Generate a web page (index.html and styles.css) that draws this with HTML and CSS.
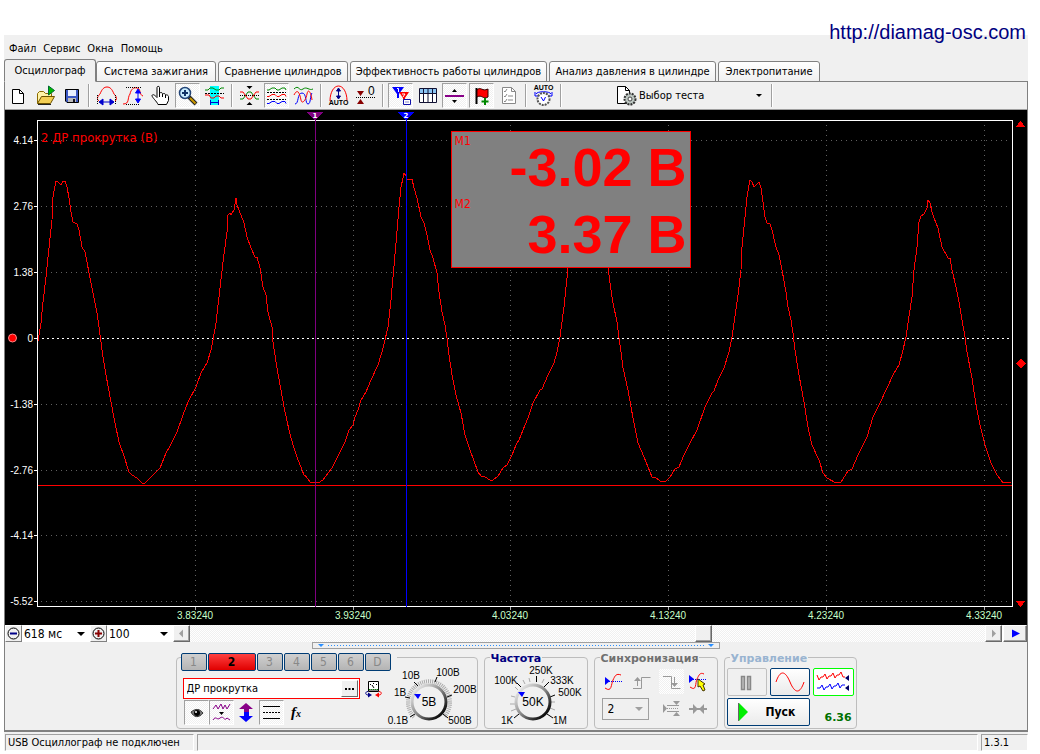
FILE: index.html
```html
<!DOCTYPE html>
<html lang="ru">
<head>
<meta charset="utf-8">
<title>Осциллограф</title>
<link rel="stylesheet" href="styles.css">
</head>
<body>
<a class="site-link" href="http://diamag-osc.com">http://diamag-osc.com</a>
<main class="app">
  <nav class="menu">
    <button>Файл</button><button>Сервис</button><button>Окна</button><button>Помощь</button>
  </nav>
  <div class="tabs" role="tablist">
    <button class="tab active" role="tab">Осциллограф</button>
    <button class="tab ignition" role="tab">Система зажигания</button>
    <button class="tab compare" role="tab">Сравнение цилиндров</button>
    <button class="tab efficiency" role="tab">Эффективность работы цилиндров</button>
    <button class="tab pressure" role="tab">Анализ давления в цилиндре</button>
    <button class="tab power" role="tab">Электропитание</button>
  </div>
  <div class="workspace">
    <div class="toolbar">
      <button class="tool" aria-label="Новый"><svg viewBox="0 0 25 25"><path d="M7.500 6.500h7l4 4v10h-11z" fill="#fff" stroke="#000"/><path d="M14.500 6.500v4h4" fill="none" stroke="#000"/></svg></button>
      <button class="tool" aria-label="Открыть"><svg viewBox="0 0 25 25"><path d="M5.500 20.500v-10l2-2h4l2 2h6v4" fill="#fff3a8" stroke="#8a6a00"/><path d="M5.500 20.500l4-7h13l-4 7z" fill="#f3cf55" stroke="#6b5200"/><path d="M16.500 3v9l6-4.500z" fill="#0b0" stroke="#063"/><path d="M6 21.500h13" stroke="#222"/></svg></button>
      <button class="tool" aria-label="Сохранить"><svg viewBox="0 0 25 25"><path d="M6.500 6.500h13v13H8l-1.500-1.500z" fill="#3b57c4" stroke="#000"/><path d="M9 7h8v6H9z" fill="#e8eeff"/><path d="M9 15h8v4H9z" fill="#bbb"/><path d="M14 16h2v3h-2z" fill="#112"/></svg></button>
      <i class="sep"></i>
      <button class="tool" aria-label="Масштаб по времени"><svg viewBox="0 0 25 25"><path d="M5 18c-3-2-1-5 1-7 2-5 4-7 7-7s5 2 7 7c2 2 4 5 1 7" fill="none" stroke="red"/><path d="M5 19h15M9 16l-4 3 4 3zM16 16l4 3-4 3z" stroke="#00c" fill="#00c"/><path d="M3.500 12v10M21.500 12v10" stroke="#000" stroke-dasharray="1 1"/></svg></button>
      <button class="tool" aria-label="Масштаб по амплитуде"><svg viewBox="0 0 25 25"><path d="M2 21c7 0 4-6 7-10 1-5 4-7 7-6 4 0 2 7 6 8" fill="none" stroke="red"/><path d="M5 4.500h16M5 21.500h14" stroke="#000" stroke-dasharray="1 1"/><path d="M17 7v11M14.500 10l2.500-4 2.500 4zM14.500 16l2.500 4 2.500-4z" stroke="#00f" fill="#00f"/></svg></button>
      <button class="tool" aria-label="Рука"><svg viewBox="0 0 25 25"><path d="M10 21.500c-1-3-6-7-6-9 1-2 3 0 5 2V4.500c0-1.500 2.500-1.500 2.500 0v6c1-1.500 3-1.500 3 1 1-1.500 3-1.500 3 1 1-1.500 3 0 3 1v4l-2 4z" fill="#fff" stroke="#000"/><path d="M11.500 10v4M14.500 11v3M17.500 12v3" stroke="#000"/></svg></button>
      <button class="tool on" aria-label="Лупа"><svg viewBox="0 0 25 25"><path d="M14 14l7 7" stroke="#222" stroke-width="4"/><path d="M15 15l5.500 5.500" stroke="#c90" stroke-width="2"/><circle cx="10" cy="10" r="5.500" fill="#c9ecff" stroke="#247" stroke-width="1.500"/><path d="M7 10h6M10 7v6" stroke="#136" stroke-width="2"/></svg></button>
      <button class="tool" aria-label="Фрагмент"><svg viewBox="0 0 25 25"><path d="M8 3h9v19H8z" fill="#0ff"/><g fill="none"><path d="M3 7h3l2-2h3l3 2h3l2-2h3" stroke="#080"/><path d="M3 10.500h19" stroke="#000" stroke-dasharray="2 1"/><path d="M3 12h4l2 3h3l2-2h3l2 2h3" stroke="red"/><path d="M8 19.500h9M8.500 17v5M16.500 17v5" stroke="#00c"/></g></svg></button>
      <i class="sep"></i>
      <button class="tool" aria-label="Наложение"><svg viewBox="0 0 25 25"><path d="M3 16h3l5-7h3l5 7h3" fill="none" stroke="#080"/><path d="M3 9h3l5 7h3l5-7h3" fill="none" stroke="red"/><path d="M3 12.500h19" stroke="#000" stroke-dasharray="1 1"/><path d="M9.500 3h6l-3 3zM9.500 22h6l-3-3z"/></svg></button>
      <button class="tool on" aria-label="Раздельно"><svg viewBox="0 0 25 25"><g fill="none"><path d="M3 7h2l3-2h3l2 2h2l3-2h3l1 2" stroke="#080"/><path d="M3 13.500h2l3-2h3l2 2h2l3-2h3l1 2" stroke="red"/><path d="M3 20.500h2l3-2h3l2 2h2l3-2h3l1 2" stroke="#00f"/><path d="M3 9.500h19M3 16.500h19" stroke="#000" stroke-dasharray="2 1"/></g></svg></button>
      <button class="tool" aria-label="Совместно"><svg viewBox="0 0 25 25"><g fill="none"><path d="M3 6c5-5 5 3 9 0s6 2 10 0" stroke="#080"/><path d="M4 21c4 0 2-11 7-11s3 11 6 11 2-9 4-11" stroke="#00f"/><path d="M3 12c4-8 6 0 7 5s5 0 6-6 4-2 5 6" stroke="red"/></g></svg></button>
      <i class="sep"></i>
      <button class="tool" aria-label="Автомасштаб"><svg viewBox="0 0 25 25"><path d="M4 18C4 9 8 3 12.500 3S21 9 21 18" fill="none" stroke="red"/><path d="M12.500 6v9M10.500 8l2-3 2 3zM10.500 13l2 3 2-3z" stroke="#008" fill="#008"/><text class="tiny" x="12.500" y="22" text-anchor="middle">AUTO</text></svg></button>
      <button class="tool" aria-label="Ноль"><svg viewBox="0 0 25 25"><path d="M4 8h7l-3.500 5zM4 21h7l-3.500-5z" fill="#800"/><path d="M3 14.500h19" stroke="#000" stroke-dasharray="1 1"/><text class="digit" x="15" y="12">0</text></svg></button>
      <i class="sep"></i>
      <button class="tool on" aria-label="Маркеры"><svg viewBox="0 0 25 25"><path d="M4 4h12l-5 7v4H9v-4z" fill="#00f"/><path d="M11 9h10l-4 6v4h-2v-4z" fill="red"/><path d="M9 5.500h1.500V9M14 11h3l-2 3" stroke="#fff" fill="none"/><path d="M15.500 16.500h7v5h-7z" fill="#fff" stroke="#11a"/><path d="M17 19h4" stroke="#88c"/></svg></button>
      <button class="tool" aria-label="Таблица"><svg viewBox="0 0 25 25"><path d="M4.500 5.500h17v14h-17z" fill="#fff" stroke="#113"/><path d="M5 6h16v4H5z" fill="#8bc5f5"/><path d="M4 10.500h18M8.500 6v13M13 6v13M17.500 6v13" stroke="#113"/></svg></button>
      <button class="tool on" aria-label="Линия"><svg viewBox="0 0 25 25"><path d="M3 13h19" stroke="#808" stroke-width="2"/><path d="M10 9h5l-2.500-3zM10 17h5l-2.500 3z"/></svg></button>
      <button class="tool on" aria-label="Флаг"><svg viewBox="0 0 25 25"><path d="M7.500 5v16" stroke="#000" stroke-width="2"/><path d="M8 7c4-4 5 2 11-1v8c-5 3-6-3-11 0z" fill="red" stroke="#300"/><path d="M16 15v7M12.500 18.500h7" stroke="#080" stroke-width="2"/></svg></button>
      <button class="tool" aria-label="Список"><svg viewBox="0 0 25 25"><path d="M6.500 4.500h9l4 4v12h-13z" fill="#fff" stroke="#888"/><path d="M15.500 4.500v4h4M8 8l1 1 2-3M8 13l1 1 2-3M8 18l1 1 2-3M12 13h5M12 17h5" fill="none" stroke="#888"/></svg></button>
      <i class="sep"></i>
      <button class="tool" aria-label="Авто"><svg viewBox="0 0 25 25"><text class="tiny" x="12.500" y="7" text-anchor="middle">AUTO</text><path d="M5 11c1-3 14-3 15 0M4 9v4h4M21 9v4h-4" fill="none" stroke="#00f"/><circle cx="12.500" cy="16" r="6" fill="#fff" stroke="#555" stroke-width="2" stroke-dasharray="2 1"/><path d="M10 14l2.500 4 2-4" fill="none" stroke="#00f"/></svg></button>
      <i class="sep"></i>
      <div class="test-picker">
        <svg class="test-icon" viewBox="0 0 22 22"><path d="M2.500 1.500h8l4 4v13h-12z" fill="#fff" stroke="#000"/><path d="M10.500 1.500v4h4" fill="none" stroke="#000"/><circle cx="15" cy="14" r="5.500" fill="#bcc6c1" stroke="#333" stroke-width="2" stroke-dasharray="2 1"/><circle cx="15" cy="14" r="2" fill="#fff" stroke="#444"/></svg>
        <label class="pick"><select aria-label="Выбор теста"><option>Выбор теста</option></select></label>
      </div>
      <i class="sep"></i>
    </div>

    <div class="scope">
      <svg class="chart" viewBox="5 110 1022 515" role="img" aria-label="2 ДР прокрутка (В)">
        <g class="grid">
          <path d="M41 140.500H1010M41 206.500H1010M41 272.500H1010M41 404.500H1010M41 470.500H1010M41 535.500H1010M41 601.500H1010"/>
          <path d="M195.500 125V605M353.500 125V605M510.500 125V605M668.500 125V605M826.500 125V605M984.500 125V605"/>
        </g>
        <path class="zero" d="M37 338.500H1010"/>
        <path class="ticks" d="M34 140.500h4M34 206.500h4M34 272.500h4M34 338.500h4M34 404.500h4M34 470.500h4M34 535.500h4M34 601.500h4"/>
        <path class="ticks dim" d="M195.500 607v3M353.500 607v3M510.500 607v3M668.500 607v3M826.500 607v3M984.500 607v3"/>
        <g class="axis light" text-anchor="end">
          <text x="33" y="144">4.14</text><text x="33" y="210">2.76</text><text x="33" y="276">1.38</text><text x="33" y="342">0</text><text x="33" y="408">-1.38</text><text x="33" y="474">-2.76</text><text x="33" y="539">-4.14</text><text x="33" y="605">-5.52</text>
        </g>
        <g class="axis time" text-anchor="middle">
          <text x="195" y="619">3.83240</text><text x="353" y="619">3.93240</text><text x="510" y="619">4.03240</text><text x="668" y="619">4.13240</text><text x="826" y="619">4.23240</text><text x="984" y="619">4.33240</text>
        </g>
        <text class="series" x="41" y="142">2 ДР прокрутка (В)</text>
        <path class="level" d="M37 485.500H1012"/>
        <path class="wave" d="M38 341L41 323 43 302 46 277 48 257 52 220 53 197 55 186 56 181 57 181 61 185 63 181 65 181 67 187 69 198 71 212 73 222 77 224 79 230 82 247 85 252 87 262 89 273 93 293 97 313 99 327 101 342 103 357 106 375 111 402 115 423 119 442 124 456 129 472 132 475 137 478 142 483 145 483 150 478 155 473 160 468 166 453 169 448 177 432 183 415 188 402 196 387 201 373 207 363 211 350 213 340 216 323 219 297 223 262 227 232 228 215 230 213 231 215 234 210 236 198 237 205 239 210 244 223 247 237 251 248 255 257 257 257 260 268 263 287 266 295 268 312 272 327 273 342 277 368 281 390 284 407 289 430 293 445 297 457 304 475 305 475 310 482 316 482 318 483 323 480 332 468 337 458 345 442 349 430 353 425 355 417 358 410 361 400 366 392 371 380 378 365 382 352 385 340 388 327 391 300 393 277 396 243 399 207 401 187 403 178 404 173 406 176 407 179 412 179 414 188 417 198 421 217 424 223 427 235 430 250 433 258 437 273 439 292 442 312 445 325 447 338 449 355 452 375 456 395 461 413 465 435 470 450 478 472 481 476 485 477 490 480 493 480 498 476 503 468 507 465 512 455 516 445 519 440 523 430 528 418 533 403 540 390 542 389 548 375 554 363 557 352 560 337 564 307 568 268 574 215 578 205 583 195 592 215 600 242 608 268 611 290 613 303 617 322 619 338 621 352 623 368 628 390 633 418 638 443 644 457 652 477 653 478 655 477 660 481 666 481 670 477 675 469 679 467 684 455 690 443 697 430 705 407 712 393 714 391 718 380 724 368 729 352 732 337 734 323 738 295 741 270 742 247 745 217 747 197 749 185 750 180 752 182 754 187 757 184 759 182 761 188 763 202 765 217 767 223 770 224 772 230 776 247 779 255 782 270 786 292 788 307 791 320 793 333 795 350 799 375 804 402 808 427 812 445 819 460 823 473 827 478 836 483 841 482 848 471 852 469 858 455 867 437 873 417 880 403 887 388 893 375 899 365 903 350 906 337 908 323 912 297 914 270 917 247 919 222 921 216 924 214 927 208 928 200 930 203 932 212 934 218 938 228 942 247 948 258 950 258 952 270 956 287 959 302 962 320 965 337 967 352 972 378 976 405 980 425 985 445 991 463 997 475 1003 483 1006 482 1011 483"/>
        <rect class="frame" x="37.500" y="120.500" width="975" height="486"/>
        <path d="M315.500 112V607" stroke="#800080"/><path d="M307 112h16l-7 8h-2z" fill="#800080"/><text class="mark" x="315" y="118">1</text>
        <path d="M406.500 112V607" stroke="#00f"/><path d="M398 112h16l-7 8h-2z" fill="#00f"/><text class="mark" x="406" y="118">2</text>
        <circle cx="12.500" cy="338" r="4" fill="red" stroke="#f88"/>
        <path d="M1015.500 127h10l-5-6zM1015.500 601h10l-5 6zM1015.500 363.500l5-5 5 5-5 5z" fill="red"/>
      </svg>
      <div class="meter">
        <span class="meter-name">M1</span><output class="meter-value">-3.02 В</output>
        <span class="meter-name second">M2</span><output class="meter-value">3.37 В</output>
      </div>
    </div>

    <div class="timeline">
      <button class="mini" aria-label="Уменьшить"><svg viewBox="0 0 17 17"><circle cx="8.500" cy="8.500" r="5.500" fill="none" stroke="#000"/><path d="M5 8.500h7" stroke="#008" stroke-width="2"/></svg></button>
      <label class="pick span"><select aria-label="Развёртка"><option>618 мс</option></select></label>
      <button class="mini" aria-label="Увеличить"><svg viewBox="0 0 17 17"><circle cx="8.500" cy="8.500" r="5.500" fill="none" stroke="#000"/><path d="M5 8.500h7M8.500 5v7" stroke="#800" stroke-width="2"/></svg></button>
      <label class="pick zoom"><select aria-label="Масштаб"><option>100</option></select></label>
      <button class="mini raised" aria-label="Влево"><svg viewBox="0 0 17 17"><path d="M10 4.500v8l-4-4z" fill="#a0a0a0"/></svg></button>
      <div class="track"><button class="thumb" aria-label="Ползунок"></button></div>
      <button class="mini raised" aria-label="Вправо"><svg viewBox="0 0 17 17"><path d="M7 4.500v8l4-4z" fill="#a0a0a0"/></svg></button>
      <button class="mini raised last" aria-label="В конец"><svg viewBox="0 0 17 17"><path d="M5 4.500v8l8-4z" fill="#00f"/></svg></button>
    </div>
    <div class="splitter"><i class="grip"></i><i class="dots"></i><i class="grip"></i></div>

    <div class="panels">
      <section class="group channel">
        <div class="channel-main">
          <div class="channel-tabs"><button>1</button><button class="current">2</button><button>3</button><button>4</button><button>5</button><button>6</button><button>D</button></div>
          <div class="name-row">
            <div class="name-box"><input type="text" value="ДР прокрутка" aria-label="Имя канала"><button class="more" aria-label="Выбрать датчик"><svg viewBox="0 0 15 15"><path d="M3 7h2v2H3zM6.500 7h2v2h-2zM10 7h2v2h-2z"/></svg></button></div>
            <button class="flat" aria-label="Датчик"><svg viewBox="0 0 20 20"><path d="M4.500 2.500h10v10h-10z" fill="#fff" stroke="#000"/><path d="M5 10h9v2H5z" fill="#888"/><path d="M5 10.500h9" stroke="#080" stroke-dasharray="1 1"/><path d="M6 5.500h1M9 4.500h1M12 5.500h1M8 6l2 3" stroke="#000"/><path d="M4 12.500c-3 0-3 3.500 0 3.500h1" fill="none" stroke="#008"/><path d="M4 13.500v5l4-2.500z" fill="#008"/><path d="M15 12.500c3 0 3 3.500 0 3.500h-1" fill="none" stroke="red"/><path d="M15 13.500v5l-4-2.500z" fill="red"/></svg></button>
          </div>
          <div class="icon-row">
            <button class="tool on" aria-label="Видимость"><svg viewBox="0 0 25 25"><path d="M7 12c5-4 9-3 12 1-4 5-9 5-12-1z" fill="#777" stroke="#333"/><circle cx="13" cy="13" r="3"/><circle cx="12" cy="12" r="1" fill="#fff"/></svg></button>
            <button class="tool on" aria-label="Фильтр"><svg viewBox="0 0 25 25"><path d="M4 9l3-4 2 4 3-5 2 5 2-4 2 4 3-5M4 20c3-5 4 1 7-2 4-3 4 4 7 0l3 2" fill="none" stroke="#808"/><path d="M10 12h5l-2.500 3z"/></svg></button>
            <button class="tool" aria-label="Смещение"><svg viewBox="0 0 25 25"><path d="M10 12V9H5l7-6 7 6h-4v3z" fill="#808"/><path d="M10 12v4H5l7 6 7-6h-4v-4z" fill="#00f"/></svg></button>
            <button class="tool on" aria-label="Линии"><svg viewBox="0 0 25 25"><path d="M4 6.500h17M4 18.500h17" stroke="#000"/><path d="M4 12.500h17" stroke="#000" stroke-dasharray="2 1"/></svg></button>
            <button class="tool fx" aria-label="Функция"><i>f</i><small>x</small></button>
          </div>
        </div>
        <svg class="knob" viewBox="387 664 90 64" role="img" aria-label="5В">
          <defs><linearGradient id="rim" x1="0" y1="0" x2="1" y2="1"><stop offset="0" stop-color="#fff"/><stop offset=".5" stop-color="#888"/><stop offset=".9" stop-color="#000"/></linearGradient></defs>
          <path d="M414 717A21 21 0 1 1 444 717" fill="none" stroke="#aaa" stroke-width="4" stroke-dasharray="1 1"/>
          <path class="dial-tick" d="M415 714l-5 3M410 698l-5-1M418 686l-4-4M435 682l2-5M447 697l5-2M443 714l5 4"/>
          <circle cx="429" cy="702" r="17" fill="#f0f0f0" stroke="url(#rim)" stroke-width="3"/>
          <path d="M414 694h7l-3 5z" fill="#00f"/>
          <text class="dial-value" x="429" y="706">5В</text>
          <g class="dial"><text x="411" y="679">10В</text><text x="448" y="676">100В</text><text x="400" y="696">1В</text><text x="465" y="693">200В</text><text x="398" y="724">0.1В</text><text x="460" y="724">500В</text></g>
        </svg>
      </section>
      <section class="group freq">
        <h2>Частота</h2>
        <svg class="knob" viewBox="488 664 96 64" role="img" aria-label="50K">
          <g stroke="#aaa"><path d="M515 704h-5M516 709l-5 2M515 697l-4-1M525 684l-2-4M530 682l-1-4M542 683l2-4M550 702h5M550 708l5 2M518 690l-3-3"/></g>
          <path class="dial-tick" d="M519 714l-5 4M521 687l-4-4M536.500 682v-6M544 687l5-5M550 697l5-2M547 714l6 4"/>
          <circle cx="533" cy="702" r="17" fill="#f0f0f0" stroke="url(#rim)" stroke-width="3"/>
          <path d="M518 692h7l-3 5z" fill="#00f"/>
          <text class="dial-value" x="533" y="706">50K</text>
          <g class="dial"><text x="541" y="674">250K</text><text x="506" y="684">100K</text><text x="562" y="684">333K</text><text x="570" y="696">500K</text><text x="507" y="724">1K</text><text x="560" y="724">1M</text></g>
        </svg>
      </section>
      <section class="group sync">
        <h2>Синхронизация</h2>
        <div class="sync-grid">
          <button class="tool" aria-label="Уровень"><svg viewBox="0 0 25 25"><path d="M4 19c7 5 6-4 8-8s3-7 8-5" fill="none" stroke="red"/><path d="M4 8v8l5-4z" fill="#00f"/><path d="M8 12.500h13" stroke="#00f" stroke-dasharray="1 1"/></svg></button>
          <button class="tool" aria-label="Фронт"><svg viewBox="0 0 25 25"><path d="M4 19.500h8.500v-11h9M8.500 17v-6" fill="none" stroke="#999"/><path d="M5 12l3.500-4 3.500 4z" fill="#999"/></svg></button>
          <button class="tool hatch" aria-label="Спад"><svg viewBox="0 0 25 25"><path d="M4 7.500h8.500v12h9M15.500 8v8" fill="none" stroke="#999"/><path d="M12 14l3.500 4 3.500-4z" fill="#999"/></svg></button>
          <button class="tool" aria-label="Ручной уровень"><svg viewBox="0 0 25 25"><path d="M4 18c7 5 5-4 7-8s3-7 7-5" fill="none" stroke="red"/><path d="M3 6v8l5-4z" fill="#00f"/><path d="M7 10.500h14" stroke="#00f" stroke-dasharray="1 1"/><path d="M12 10l7 5-2 1 2 5-2 1-3-5-2 1z" fill="#ff0" stroke="#430"/></svg></button>
          <label class="pick sync-source"><select aria-label="Источник" disabled><option>2</option></select></label>
          <button class="tool" aria-label="Диапазон"><svg viewBox="0 0 25 25"><path d="M4 7v9l4-4.500zM14 4h7l-3.500 4zM14 19h7l-3.500-4z" fill="#999"/><path d="M8 11.500h12" stroke="#999" stroke-dasharray="1 1"/><path d="M8 8.500h12M8 14.500h12" stroke="#999"/></svg></button>
          <button class="tool" aria-label="Центр"><svg viewBox="0 0 25 25"><path d="M3 12h18" stroke="#999" stroke-width="2"/><path d="M7 7v10l5-5zM18 7v10l-5-5z" fill="#999"/></svg></button>
        </div>
      </section>
      <section class="group control">
        <h2>Управление</h2>
        <div class="control-grid">
          <button class="push idle" aria-label="Пауза"><svg viewBox="0 0 38 26"><path d="M13.500 7.500h3v13h-3zM19.500 7.500h3v13h-3z" fill="#bbb" stroke="#888" stroke-width="1.500"/></svg></button>
          <button class="push" aria-label="Синус"><svg viewBox="0 0 38 26"><path d="M5 13C9 1 14 1 19 13s10 12 14 0" fill="none" stroke="red"/></svg></button>
          <button class="push live" aria-label="Поток"><svg viewBox="0 0 38 26"><path d="M3 6l2 5 2-3h2l2-3 2 5 2-3h2l2-3 2 5 2-3h2l2-3 2 5h2" fill="none" stroke="red"/><path d="M3 19h3l2-3 2 5 2-3h2l2-3 2 5 2-3h2l2-3 2 5 2-3h3" fill="none" stroke="#00f"/><path d="M35 6v6l-4-3zM35 16v6l-4-3z" fill="#006"/></svg></button>
          <button class="push start"><svg viewBox="0 0 14 22"><path d="M2 2v18l9-9z" fill="#0e0"/><path d="M1.500 2v18" stroke="#666"/></svg><span>Пуск</span></button>
          <output class="rate">6.36</output>
        </div>
      </section>
    </div>
  </div>
  <footer class="status"><span>USB Осциллограф не подключен</span><span></span><span>1.3.1</span></footer>
</main>
</body>
</html>
```
FILE: styles.css
```css
* { box-sizing: border-box; }
body { margin: 0; background: #fff; color: #000; font: 11px/14px "DejaVu Sans Condensed", "DejaVu Sans", sans-serif; }
button, select, input { font: inherit; color: inherit; margin: 0; padding: 0; border: 0; background: none; border-radius: 0; }
svg { display: block; }
.site-link { position: absolute; top: 21px; right: 14px; font: 20px/22px "Liberation Sans", Arial, sans-serif; color: #000080; text-decoration: none; }
.app { margin: 35px 12px 0 4px; background: #f0f0f0; }
.menu { display: flex; gap: 7px; height: 24px; padding: 3px 5px 0; align-items: center; }
.tabs { display: flex; gap: 2px; height: 23px; align-items: flex-end; position: relative; z-index: 1; }
.tab { height: 21px; text-align: center; white-space: nowrap; border: 1px solid #808080; border-radius: 3px 3px 0 0; background: linear-gradient(#fff, #f0f0f0); }
.tab.active { width: 92px; height: 23px; margin-right: -2px; border-bottom-color: #f0f0f0; background: #f0f0f0; }
.ignition { width: 120px; }
.compare { width: 130px; }
.efficiency { width: 197px; }
.pressure { width: 167px; }
.power { width: 102px; }
.workspace { margin-top: -1px; border: 1px solid #808080; border-bottom-width: 2px; }
.toolbar { display: flex; gap: 2px; align-items: center; height: 28px; border-bottom: 1px solid #a0a0a0; }
.tool { width: 25px; height: 25px; flex: none; border: 1px solid transparent; }
.tool svg { width: 25px; height: 25px; margin: -1px; }
.on, .hatch, .track { background: repeating-conic-gradient(#fff 0 25%, #f0f0f0 0 50%) 0 0 / 2px 2px; }
.on { border-color: #a0a0a0 #fff #fff #a0a0a0; }
.sep { width: 6px; height: 23px; background: linear-gradient(90deg, transparent 2px, #a0a0a0 2px 3px, #fff 3px 4px, transparent 4px); }
.tiny { font: bold 7px "Liberation Sans", sans-serif; }
.digit { font: 12px "Liberation Sans", sans-serif; }
.test-picker { display: flex; align-items: center; width: 201px; padding-left: 49px; }
.test-icon { width: 22px; height: 22px; }
.pick { position: relative; display: flex; flex: 1; height: 17px; }
.pick select { appearance: none; width: 100%; padding-left: 2px; opacity: 1; outline: 0; }
.pick::after { content: ""; position: absolute; right: 5px; top: 7px; border: 4px solid transparent; border-top-color: #000; border-bottom: 0; }
.test-picker .pick::after { border-width: 3px 3px 0; }
.scope { position: relative; background: #000; }
.chart { width: 100%; height: auto; }
.chart path, .frame { shape-rendering: crispEdges; }
.grid path { fill: none; stroke: #606060; stroke-dasharray: 1 4; }
.zero { stroke: #fff; stroke-dasharray: 2 3; }
.ticks { stroke: #fff; }
.dim { stroke: #aaa; }
.frame { fill: none; stroke: #fff; }
.wave { fill: none; stroke: red; }
.level { stroke: red; }
.axis { font: 10px "Liberation Sans", Arial, sans-serif; }
.light { fill: #fff; }
.time { fill: #c8ffc8; }
.series { font-size: 13px; fill: red; }
.mark { font: bold 7px "DejaVu Sans", sans-serif; fill: #fff; text-anchor: middle; }
.meter { position: absolute; top: 4%; left: 43.6%; width: 240px; height: 137px; padding: 2px 3px; border: 1px solid red; background: #808080; color: red; }
.meter-name { display: block; height: 4px; margin-bottom: -4px; font-size: 12px; }
.meter-name.second { margin: -4px 0 0; }
.meter-value { display: block; text-align: right; font: bold 54px/67px "Liberation Sans", Arial, sans-serif; }
.timeline { display: flex; height: 17px; background: #fff; font-size: 12px; }
.mini { width: 17px; height: 17px; flex: none; border: 1px solid; border-color: #fff #808080 #808080 #fff; background: #f0f0f0; }
.mini svg { width: 17px; height: 17px; margin: -1px; }
.raised, .thumb { border: 1px solid; border-color: #fff #696969 #696969 #fff; box-shadow: inset -1px -1px #a0a0a0; background: #f0f0f0; }
.last { width: 24px; margin-left: 1px; }
.last svg { margin-left: 3px; }
.span { flex: 0 0 68px; }
.zoom { flex: 0 0 66px; }
.track { flex: 1; display: flex; justify-content: flex-end; padding-right: 273px; }
.thumb { width: 17px; height: 17px; }
.splitter { display: flex; align-items: center; width: 408px; height: 7px; margin: 0 auto; border: 1px solid #a0a0a0; padding: 0 5px; gap: 4px; }
.grip { border: 3px solid transparent; border-top-color: #2a8fff; border-bottom: 0; }
.dots { flex: 1; height: 1px; background: repeating-linear-gradient(90deg, #2a8fff 0 1px, transparent 1px 3px); }
.panels { display: flex; justify-content: center; align-items: flex-start; gap: 6px; padding: 8px 0 1px; }
.group { height: 72px; border: 1px solid #bdbdbd; border-radius: 4px; }
.group h2 { width: max-content; height: 10px; margin: -5px 0 0 5px; padding: 0 1px; background: #f0f0f0; font: bold 11px/12px "DejaVu Sans", sans-serif; }
.channel { display: flex; width: 302px; padding-left: 4px; }
.channel-main { width: 206px; flex: none; }
.channel-tabs { display: flex; gap: 1px; width: 216px; margin-top: -5px; background: #f0f0f0; }
.channel-tabs button { width: 26px; height: 18px; border: 1px solid #003c74; border-radius: 2px; background: linear-gradient(#d0d0d0, #b4b4b4); color: #888; font-size: 12px; }
.channel-tabs .current { width: 48px; background: linear-gradient(#ff4040, #e00000); color: #000; font-weight: bold; }
.name-row { display: flex; gap: 4px; align-items: center; margin: 7px 0 0 2px; }
.name-box { display: flex; width: 177px; height: 21px; padding: 1px; border: 1px solid red; background: #fff; }
.name-box input { flex: 1; min-width: 0; padding-left: 2px; }
.more { width: 17px; height: 17px; border: 1px solid; border-color: #fff #696969 #696969 #fff; background: #f0f0f0; }
.flat, .flat svg { width: 20px; height: 20px; }
.icon-row { display: flex; margin: 1px 0 0 3px; }
.fx { font: bold 15px/20px "Liberation Serif", serif; }
.fx small { font-size: 10px; font-style: italic; }
.knob { flex: none; position: relative; }
.channel .knob { width: 90px; height: 64px; margin-top: 6px; }
.freq .knob { width: 96px; height: 64px; margin: 1px 0 0 3px; }
.freq { width: 104px; }
.freq h2 { color: #000080; }
.dial-tick { stroke: #000; }
.dial { font: 10px "Liberation Sans", Arial, sans-serif; text-anchor: middle; }
.dial-value { font: 12px "Liberation Sans", Arial, sans-serif; text-anchor: middle; }
.sync { width: 124px; }
.sync h2 { color: #707070; }
.sync-grid { display: grid; grid-template-columns: 28px 30px 27px 25px; row-gap: 3px; margin: 6px 0 0 6px; }
.sync-source { grid-column: 1 / 3; width: 47px; height: 22px; margin: 1px; border: 1px solid #a0a0a0; font-size: 12px; }
.sync-source select { padding-left: 5px; }
.sync-source select:disabled { color: #000; }
.sync-source::after { top: 8px; border-top-color: #a0a0a0; }
.control { width: 133px; }
.control h2 { color: #99b4d1; }
.control-grid { display: grid; grid-template-columns: 40px 40px 41px; gap: 2px 3px; margin: 5px 0 0 2px; }
.push { height: 28px; border: 1px solid #003c74; border-radius: 2px; background: linear-gradient(#fff, #eaeaea); }
.push svg { width: 38px; height: 26px; }
.idle { border-color: #c0c0c0; background: #f0f0f0; }
.live { border-color: #0f0; background: #fff; }
.start { grid-column: 1 / 3; display: flex; align-items: center; gap: 15px; padding-left: 9px; font: bold 12px/16px "DejaVu Sans Condensed", sans-serif; }
.start svg { width: 14px; height: 22px; }
.rate { align-self: center; padding: 12px 0 0 12px; color: #007000; font: bold 11px/14px "DejaVu Sans", sans-serif; }
.status { display: flex; gap: 3px; height: 19px; padding: 2px 0 0 1px; }
.status span { height: 17px; padding: 1px 2px; border: 1px solid; border-color: #a0a0a0 #fff #fff #a0a0a0; }
.status span:nth-child(1) { width: 189px; white-space: nowrap; }
.status span:nth-child(2) { flex: 1; }
.status span:nth-child(3) { width: 47px; }
```
